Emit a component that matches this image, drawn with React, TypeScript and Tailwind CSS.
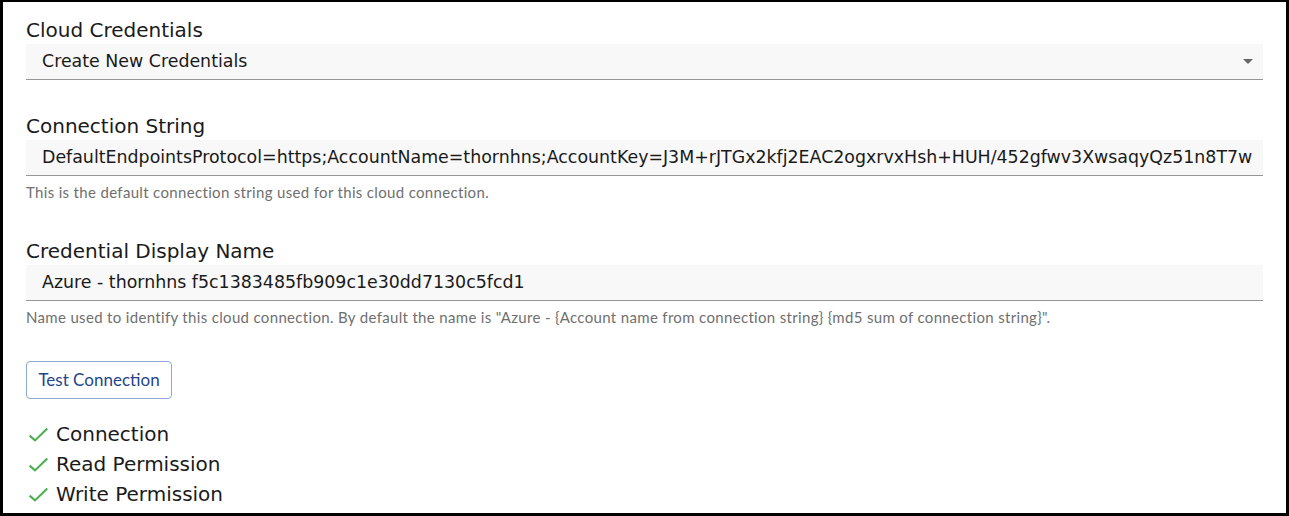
import React from "react";

const connectionString =
  "DefaultEndpointsProtocol=https;AccountName=thornhns;AccountKey=J3M+rJTGx2kfj2EAC2ogxrvxHsh+HUH/452gfwv3XwsaqyQz51n8T7w";

function CheckMark() {
  return (
    <svg width="24" height="24" viewBox="0 0 24 24" className="shrink-0">
      <polyline
        points="3.6,13.6 9,18.4 21.3,6.6"
        fill="none"
        stroke="#4caf50"
        strokeWidth="2.1"
        strokeLinecap="butt"
        strokeLinejoin="miter"
      />
    </svg>
  );
}

function Label({ children }: { children: React.ReactNode }) {
  return <div className="text-[20px] leading-[24px] mb-[2px]">{children}</div>;
}

function Helper({ children }: { children: React.ReactNode }) {
  return (
    <div className="mt-[6px] text-[15px] leading-[20px] tracking-[0.33px] text-[#6f6f6f] font-['Lato',sans-serif]">
      {children}
    </div>
  );
}

function FieldBox({ children, trailing }: { children: React.ReactNode; trailing?: React.ReactNode }) {
  return (
    <div className="h-[36px] bg-[#f8f8f8] border-b border-[#959595] flex items-center pl-4 pr-[10px] text-[17.4px] overflow-hidden">
      <div className="flex-1 whitespace-nowrap overflow-hidden">{children}</div>
      {trailing}
    </div>
  );
}

export default function App() {
  const results = ["Connection", "Read Permission", "Write Permission"];
  return (
    <div className="h-[516px] w-[1289px] box-border border-black border-t-2 border-l-[3px] border-r-[3px] border-b-[3px] bg-white px-[23px] pt-[16px] text-[#1a1a1a] font-['DejaVu_Sans',sans-serif]">
      <section>
        <Label>Cloud Credentials</Label>
        <FieldBox
          trailing={
            <svg width="10" height="5" viewBox="0 0 10 5" className="shrink-0">
              <polygon points="0,0 10,0 5,5" fill="#666666" />
            </svg>
          }
        >
          Create New Credentials
        </FieldBox>
      </section>

      <section className="mt-[34px]">
        <Label>Connection String</Label>
        <FieldBox>{connectionString}</FieldBox>
        <Helper>This is the default connection string used for this cloud connection.</Helper>
      </section>

      <section className="mt-[37px]">
        <Label>Credential Display Name</Label>
        <FieldBox>Azure - thornhns f5c1383485fb909c1e30dd7130c5fcd1</FieldBox>
        <Helper>
          Name used to identify this cloud connection. By default the name is "Azure - {"{"}Account name from
          connection string{"}"} {"{"}md5 sum of connection string{"}"}".
        </Helper>
      </section>

      <button
        type="button"
        className="mt-[34px] h-[38px] w-[146px] rounded-[4px] border border-[#8ea8d6] bg-white text-[17px] text-[#23468a] font-['Lato',sans-serif] flex items-center justify-center"
      >
        Test Connection
      </button>

      <ul className="mt-[20px]">
        {results.map((r) => (
          <li key={r} className="flex items-center h-[30px] text-[20px] leading-[30px]">
            <CheckMark />
            <span className="ml-[6px]">{r}</span>
          </li>
        ))}
      </ul>
    </div>
  );
}
